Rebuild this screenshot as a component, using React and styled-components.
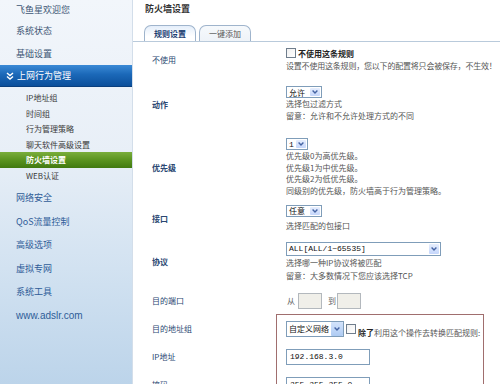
import React from "react";
import styled, { createGlobalStyle } from "styled-components";

const CJK = `"Noto Sans CJK SC", "Noto Sans", sans-serif`;
const MONO = `"Liberation Mono", "DejaVu Sans Mono", monospace`;

const Global = createGlobalStyle`
  html, body { margin: 0; padding: 0; background: #fff; }
  body { font-family: ${CJK}; overflow: hidden; }
`;

const Page = styled.div`
  display: flex;
  width: 500px;
  height: 384px;
  overflow: hidden;
`;

/* ---------- sidebar ---------- */
const Sidebar = styled.nav`
  width: 132px;
  flex: none;
  display: flex;
  flex-direction: column;
  background: linear-gradient(180deg, #f2f6fb 0%, #e8eff7 40%, #d2e2f1 70%, #bcd4ea 100%);
`;

const NavItem = styled.div`
  height: ${(p) => p.$h}px;
  display: flex;
  align-items: center;
  padding-left: 16px;
  font-size: ${(p) => (p.$latin ? "10px" : "9px")};
  font-family: ${(p) => (p.$latin ? `"Liberation Sans", Arial, sans-serif` : CJK)};
  color: ${(p) => (p.$blue ? "#2f5c98" : "#3d5675")};
  white-space: nowrap;
`;

const ActiveHeader = styled.div`
  height: 22px;
  display: flex;
  align-items: center;
  gap: 3px;
  padding-left: 6px;
  box-sizing: border-box;
  background: linear-gradient(180deg, #3b8ad6 0%, #1b68b8 45%, #0b4f9b 100%);
  border-bottom: 1px solid #0a3f7d;
  color: #fff;
  font-size: 9px;
  white-space: nowrap;
`;

const SubList = styled.div`
  padding: 3px 0 3px;
  display: flex;
  flex-direction: column;
`;

const SubItem = styled.div`
  height: 15.5px;
  display: flex;
  align-items: center;
  padding-left: 26px;
  font-size: 8px;
  white-space: nowrap;
  color: ${(p) => (p.$active ? "#fff" : "#3a3a3a")};
  font-weight: ${(p) => (p.$active ? 700 : 400)};
  background: ${(p) =>
    p.$active ? "linear-gradient(180deg, #7aae3c 0%, #5a931f 50%, #417a10 100%)" : "transparent"};
`;

/* ---------- main ---------- */
const Main = styled.main`
  flex: 1;
  background: #fff;
  border-left: 1px solid #d3deea;
  display: flex;
  flex-direction: column;
  min-width: 0;
`;

const Title = styled.div`
  height: 18px;
  line-height: 18px;
  padding-left: 12px;
  font-size: 9px;
  font-weight: 700;
  color: #333;
`;

const TabBar = styled.div`
  margin-top: 7px;
  padding-left: 11px;
  display: flex;
  gap: 3px;
  border-bottom: 1px solid #b9cadb;
  height: 16px;
`;

const Tab = styled.div`
  height: 16px;
  box-sizing: border-box;
  padding: 0 9px;
  border: 1px solid #9fb4cc;
  border-bottom: none;
  border-radius: 7px 7px 0 0;
  font-size: 8px;
  line-height: 15px;
  white-space: nowrap;
  color: ${(p) => (p.$active ? "#1d3f73" : "#555")};
  font-weight: ${(p) => (p.$active ? 700 : 400)};
  background: ${(p) =>
    p.$active ? "linear-gradient(180deg, #e4eefa 0%, #ffffff 70%)" : "linear-gradient(180deg, #f6f9fc 0%, #eef3f8 100%)"};
`;

const Row = styled.div`
  display: flex;
  align-items: center;
  padding: ${(p) => p.$pt}px 0 ${(p) => p.$pb}px;
`;

const Label = styled.div`
  width: ${(p) => p.$w || 153}px;
  flex: none;
  box-sizing: border-box;
  padding-left: 19px;
  font-size: 8px;
  color: #2a4772;
  font-weight: ${(p) => (p.$strong ? 700 : 400)};
  white-space: nowrap;
`;

const Value = styled.div`
  display: flex;
  flex-direction: column;
  align-items: flex-start;
  min-width: 0;
`;

const Desc = styled.div`
  font-size: 8px;
  line-height: ${(p) => p.$lh || 12}px;
  margin-top: ${(p) => p.$mt || 0}px;
  letter-spacing: ${(p) => p.$ls || 0}px;
  color: #555;
  white-space: nowrap;
`;

const CheckLine = styled.div`
  display: flex;
  align-items: center;
  height: 12px;
  gap: 2px;
`;

const Check = styled.span`
  width: 10px;
  height: 10px;
  box-sizing: border-box;
  border: 1px solid #6f7d8c;
  background: linear-gradient(135deg, #f0f0f0 0%, #ffffff 100%);
  flex: none;
`;

const Strong = styled.span`
  font-size: 8px;
  font-weight: 700;
  color: #222;
  white-space: nowrap;
`;

const Plain = styled.span`
  font-size: 8px;
  color: #555;
  white-space: nowrap;
`;

const Select = styled.div`
  display: inline-flex;
  align-items: stretch;
  box-sizing: border-box;
  width: ${(p) => p.$w}px;
  height: ${(p) => p.$h || 12}px;
  border: 1px solid #7f9db9;
  background: #fff;
  flex: none;
`;

const SelText = styled.span`
  flex: 1;
  padding-left: 2px;
  display: flex;
  align-items: center;
  font-size: 8px;
  font-family: ${(p) => (p.$mono ? MONO : CJK)};
  color: #111;
  white-space: nowrap;
  overflow: hidden;
`;

const SelArrow = styled.span`
  width: ${(p) => (p.$hot ? 12 : 10)}px;
  margin: ${(p) => (p.$hot ? 0 : 1)}px;
  display: flex;
  align-items: center;
  justify-content: center;
  border-radius: 1px;
  background: ${(p) =>
    p.$hot ? "linear-gradient(180deg, #d3e3fb 0%, #aecbf3 100%)" : "linear-gradient(180deg, #e6eefd 0%, #c5d6fb 100%)"};
`;

const Arrow = () => (
  <svg width="6" height="4" viewBox="0 0 6 4">
    <polyline points="0.6,0.6 3,3 5.4,0.6" fill="none" stroke="#4463a3" strokeWidth="1.4" />
  </svg>
);

const DropDown = ({ w, h, text, mono, hot }) => (
  <Select $w={w} $h={h}>
    <SelText $mono={mono}>{text}</SelText>
    <SelArrow $hot={hot}>
      <Arrow />
    </SelArrow>
  </Select>
);

const TextBox = styled.input`
  box-sizing: border-box;
  width: ${(p) => p.$w}px;
  height: 16px;
  margin: 0;
  padding: 0 0 0 3px;
  border: 1px solid ${(p) => (p.$muted ? "#b3b8bd" : "#7f9db9")};
  background: ${(p) => (p.$muted ? "#f0efe9" : "#fff")};
  font-family: ${MONO};
  font-size: 8px;
  color: #111;
  outline: none;
`;

const PortLine = styled.div`
  display: flex;
  align-items: center;
  height: 16px;
`;

const PortWord = styled.span`
  font-size: 8px;
  color: #666;
  margin: ${(p) => p.$m};
`;

const Group = styled.div`
  display: flex;
  align-items: flex-start;
`;

const GroupLabels = styled.div`
  width: 143px;
  flex: none;
  padding-top: 1px;
  display: flex;
  flex-direction: column;
`;

const GroupLabel = styled.div`
  height: 28px;
  display: flex;
  align-items: center;
  padding-left: 19px;
  font-size: 8px;
  color: #2a4772;
  white-space: nowrap;
`;

const Frame = styled.div`
  width: 208px;
  box-sizing: border-box;
  border: 1px solid #a06e6e;
  padding-left: 9px;
  display: flex;
  flex-direction: column;
  height: 120px;
`;

const FrameRow = styled.div`
  height: 28px;
  display: flex;
  align-items: center;
  gap: 2px;
`;

const DoubleChevron = () => (
  <svg width="8" height="8" viewBox="0 0 8 8">
    <polyline points="1,1 4,3.5 7,1" fill="none" stroke="#fff" strokeWidth="1.5" />
    <polyline points="1,4.5 4,7 7,4.5" fill="none" stroke="#fff" strokeWidth="1.5" />
  </svg>
);

export default function App() {
  return (
    <>
      <Global />
      <Page>
        <Sidebar>
          <NavItem $h={19}>飞鱼星欢迎您</NavItem>
          <NavItem $h={23}>系统状态</NavItem>
          <NavItem $h={23}>基础设置</NavItem>
          <ActiveHeader>
            <DoubleChevron />
            上网行为管理
          </ActiveHeader>
          <SubList>
            <SubItem>IP地址组</SubItem>
            <SubItem>时间组</SubItem>
            <SubItem>行为管理策略</SubItem>
            <SubItem>聊天软件高级设置</SubItem>
            <SubItem $active>防火墙设置</SubItem>
            <SubItem>WEB认证</SubItem>
          </SubList>
          <NavItem $h={23.5} $blue>网络安全</NavItem>
          <NavItem $h={23.5} $blue>QoS流量控制</NavItem>
          <NavItem $h={23.5} $blue>高级选项</NavItem>
          <NavItem $h={23.5} $blue>虚拟专网</NavItem>
          <NavItem $h={23.5} $blue>系统工具</NavItem>
          <NavItem $h={23.5} $blue $latin>www.adslr.com</NavItem>
        </Sidebar>

        <Main>
          <Title>防火墙设置</Title>
          <TabBar>
            <Tab $active>规则设置</Tab>
            <Tab>一键添加</Tab>
          </TabBar>

          <Row $pt={5} $pb={7}>
            <Label>不使用</Label>
            <Value>
              <CheckLine>
                <Check />
                <Strong>不使用这条规则</Strong>
              </CheckLine>
              <Desc $mt={1} $ls={-0.2}>设置不使用这条规则，您以下的配置将只会被保存，不生效！</Desc>
            </Value>
          </Row>

          <Row $pt={7} $pb={7}>
            <Label $strong>动作</Label>
            <Value>
              <DropDown w={36} text="允许" />
              <Desc>选择包过滤方式</Desc>
              <Desc>留意：允许和不允许处理方式的不同</Desc>
            </Value>
          </Row>

          <Row $pt={9} $pb={3}>
            <Label $strong>优先级</Label>
            <Value>
              <DropDown w={22} text="1" mono />
              <Desc $lh={11.7}>优先级0为高优先级。</Desc>
              <Desc $lh={11.7}>优先级1为中优先级。</Desc>
              <Desc $lh={11.7}>优先级2为低优先级。</Desc>
              <Desc $lh={11.7}>同级别的优先级，防火墙高于行为管理策略。</Desc>
            </Value>
          </Row>

          <Row $pt={5} $pb={4}>
            <Label $strong>接口</Label>
            <Value>
              <DropDown w={36} text="任意" />
              <Desc $mt={3}>选择匹配的包接口</Desc>
            </Value>
          </Row>

          <Row $pt={6} $pb={5}>
            <Label $strong>协议</Label>
            <Value>
              <DropDown w={155} h={14} text="ALL[ALL/1~65535]" mono />
              <Desc $lh={13}>选择哪一种IP协议将被匹配</Desc>
              <Desc $lh={13}>留意：大多数情况下您应该选择TCP</Desc>
            </Value>
          </Row>

          <Row $pt={6} $pb={5}>
            <Label>目的端口</Label>
            <PortLine>
              <PortWord $m="0 3px 0 1px">从</PortWord>
              <TextBox $w={24} $muted readOnly defaultValue="" />
              <PortWord $m="0 1px 0 6px">到</PortWord>
              <TextBox $w={24} $muted readOnly defaultValue="" />
            </PortLine>
          </Row>

          <Group>
            <GroupLabels>
              <GroupLabel>目的地址组</GroupLabel>
              <GroupLabel>IP地址</GroupLabel>
              <GroupLabel>掩码</GroupLabel>
            </GroupLabels>
            <Frame>
              <FrameRow>
                <DropDown w={58} h={16} text="自定义网络" hot />
                <Check />
                <span>
                  <Strong>除了</Strong>
                  <Plain>利用这个操作去转换匹配规则:</Plain>
                </span>
              </FrameRow>
              <FrameRow>
                <TextBox $w={84} readOnly defaultValue="192.168.3.0" />
              </FrameRow>
              <FrameRow>
                <TextBox $w={84} readOnly defaultValue="255.255.255.0" />
              </FrameRow>
            </Frame>
          </Group>
        </Main>
      </Page>
    </>
  );
}
